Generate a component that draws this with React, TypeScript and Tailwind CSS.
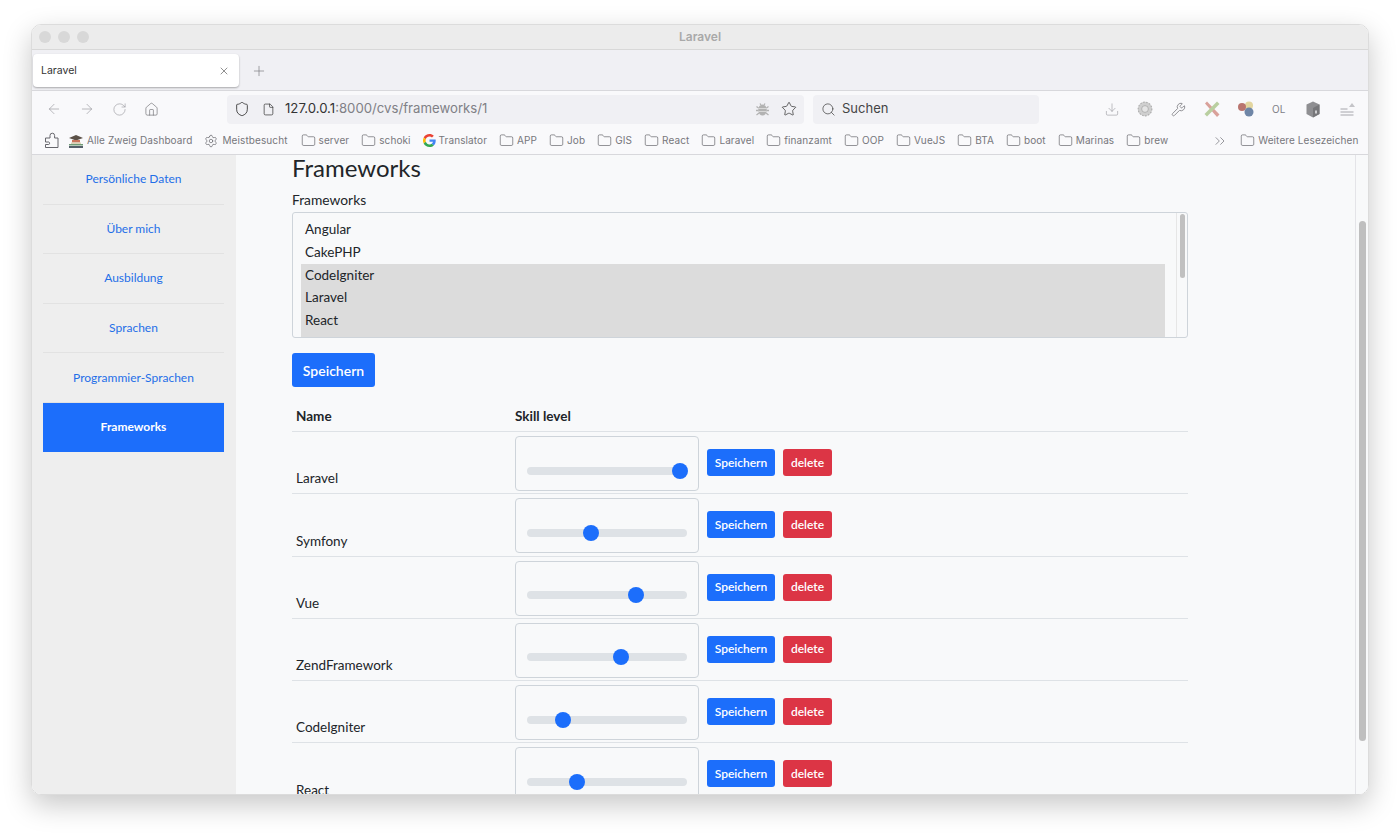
import { ArrowLeft, ArrowRight, ChevronsRight, Download, File, Folder, Home, Plus, RotateCw, Search, Settings, Shield, Star, Wrench, X } from 'lucide-react'

const bookmarks = ['server', 'schoki']
const folders = ['APP', 'Job', 'GIS', 'React', 'Laravel', 'finanzamt', 'OOP', 'VueJS', 'BTA', 'boot', 'Marinas', 'brew']
const navItems = ['Persönliche Daten', 'Über mich', 'Ausbildung', 'Sprachen', 'Programmier-Sprachen']
const options = [
  { name: 'Angular', selected: false },
  { name: 'CakePHP', selected: false },
  { name: 'CodeIgniter', selected: true },
  { name: 'Laravel', selected: true },
  { name: 'React', selected: true },
]
const rows = [
  { name: 'Laravel', thumb: 145 },
  { name: 'Symfony', thumb: 56 },
  { name: 'Vue', thumb: 101 },
  { name: 'ZendFramework', thumb: 86 },
  { name: 'CodeIgniter', thumb: 28 },
  { name: 'React', thumb: 42 },
]

function FolderMark({ label }: { label: string }) {
  return (
    <div className="flex items-center gap-[3px] shrink-0">
      <Folder size={15} strokeWidth={1} className="text-[#55555c]" />
      <span>{label}</span>
    </div>
  )
}

function PuzzleIcon() {
  return (
    <svg width="15" height="17" viewBox="0 0 15 17" fill="none" stroke="#66666c" strokeWidth="1" className="shrink-0">
      <path d="M1.500 6H6V3.500a2.300 2.300 0 0 1 4.600 0V6h3.400v9.500H1.500V12.500h3.200c1.200 0 1.200-2.500 0-2.500H1.500z" strokeLinejoin="round" />
    </svg>
  )
}

function CapIcon() {
  return (
    <svg width="16" height="16" viewBox="0 0 16 16" className="shrink-0">
      <path d="M1 5l7-3 7 3-7 2.500z" fill="#5b5148" />
      <path d="M4 7h8v2.500H4z" fill="#c9745c" />
      <path d="M3 9.500h10V11H3z" fill="#d9d3b8" />
      <path d="M1 11h14v1.500H1z" fill="#6f9a76" />
      <path d="M1 13h14v2H1z" fill="#55606a" />
    </svg>
  )
}

function GoogleIcon() {
  return (
    <svg width="13" height="13" viewBox="0 0 48 48" className="shrink-0">
      <path fill="#EA4335" d="M24 9.500c3.500 0 6.700 1.300 9.100 3.500l6.800-6.800C35.800 2.400 30.300 0 24 0 14.600 0 6.500 5.400 2.600 13.200l7.900 6.200C12.400 13.700 17.700 9.500 24 9.500z" />
      <path fill="#4285F4" d="M46.900 24.500c0-1.600-.1-3.100-.4-4.500H24v9h12.900c-.6 3-2.200 5.500-4.800 7.200l7.700 6c4.500-4.200 7.100-10.300 7.100-17.700z" />
      <path fill="#FBBC05" d="M10.500 28.600c-.5-1.400-.8-3-.8-4.600s.3-3.200.8-4.600l-7.900-6.200C1 16.500 0 20.100 0 24s1 7.500 2.600 10.800z" />
      <path fill="#34A853" d="M24 48c6.500 0 11.900-2.100 15.900-5.800l-7.700-6c-2.200 1.500-4.900 2.300-8.200 2.300-6.300 0-11.600-4.200-13.500-9.900l-7.900 6.200C6.500 42.600 14.600 48 24 48z" />
    </svg>
  )
}

function BugIcon() {
  return (
    <svg width="15" height="16" viewBox="0 0 15 16" fill="none" className="ml-auto shrink-0">
      <path d="M5 2.500L6 4M10 2.500L9 4M1.500 5.500L3.500 7M13.500 5.500L11.500 7M1 9.500h2.500M14 9.500h-2.500M1.500 14l2.500-2M13.500 14L11 12" stroke="#b2b2b2" strokeWidth="1.300" />
      <ellipse cx="7.500" cy="9" rx="4.300" ry="5.500" fill="#b2b2b2" />
      <path d="M3.500 7.500h8M3.500 10.500h8" stroke="#e6e6e6" strokeWidth=".7" />
    </svg>
  )
}

function GearDiscIcon() {
  return (
    <svg width="16" height="16" viewBox="0 0 16 16">
      <circle cx="8" cy="8" r="7.200" fill="#cfcfcf" />
      <circle cx="8" cy="8" r="6.800" fill="none" stroke="#b0b0b0" strokeWidth="1.200" strokeDasharray="1.500 1.500" />
      <circle cx="8" cy="8" r="3.400" fill="#e4e4e4" stroke="#a8a8a8" strokeWidth=".8" />
    </svg>
  )
}

function CrossIcon() {
  return (
    <svg width="18" height="18" viewBox="0 0 18 18">
      <path d="M2 3.500L4 1.500l12.500 13-2.500 2.500z" fill="#d9a19a" />
      <path d="M14 1.500l2.500 2.500L4 16.500 1.500 14z" fill="#b9cfa0" />
    </svg>
  )
}

function BallsIcon() {
  return (
    <svg width="18" height="18" viewBox="0 0 18 18">
      <circle cx="12" cy="5.500" r="4" fill="#e3d6a0" />
      <circle cx="5" cy="7" r="4" fill="#b9756f" />
      <circle cx="12" cy="12" r="4.500" fill="#6f86a6" />
    </svg>
  )
}

function CubeIcon() {
  return (
    <svg width="14" height="17" viewBox="0 0 14 17">
      <path d="M7 .5l6.500 3v9.500L7 16.500.5 13V3.500z" fill="#8f8f92" />
      <path d="M7 7v9.500L13.500 13V3.500z" fill="#77777a" />
      <path d="M9 9.500h2v3H9z" fill="#cfcfd1" />
    </svg>
  )
}

function OverflowIcon() {
  return (
    <svg width="15" height="15" viewBox="0 0 15 15">
      <path d="M9 5l3-4 3 4z" fill="#c4c4c8" />
      <path d="M.5 7h7M.5 10h13M.5 13h13" stroke="#a6a6ac" strokeWidth="1" />
    </svg>
  )
}

function SkillRow({ name, thumb }: { name: string; thumb: number }) {
  return (
    <div className="flex h-[62.3px] border-b border-[#dee2e6]">
      <div className="w-[223px] px-1 flex items-end pb-[5px] text-[13.5px] leading-5 text-[#212529]">{name}</div>
      <div className="h-[55px] w-[184px] shrink-0 bg-[#f8f9fa] border border-[#ced4da] rounded flex items-center pt-[14px] px-[11px] mt-1">
        <div className="relative w-full h-2 rounded-full bg-[#dee2e6]">
          <div className="absolute -top-1 w-4 h-4 rounded-full bg-[#1c6efb]" style={{ left: thumb }} />
        </div>
      </div>
      <div className="flex items-start gap-2 ml-2 pt-[17px]">
        <button className="h-[27px] w-[68px] rounded-[3px] bg-[#1c6efb] text-white text-[12px] font-semibold">Speichern</button>
        <button className="h-[27px] w-[49px] rounded-[3px] bg-[#dc3545] text-white text-[12px] font-semibold">delete</button>
      </div>
    </div>
  )
}

export default function App() {
  return (
    <div className="w-[1400px] h-[834px] bg-white pt-6 pl-[31px] overflow-hidden">
      <div className="w-[1338px] h-[771px] rounded-[10px] overflow-hidden flex flex-col border border-[#dcdcdc] shadow-[0_10px_28px_rgba(0,0,0,0.22)] font-['Inter',sans-serif]">
        {/* Title bar */}
        <div className="relative h-[25px] shrink-0 bg-[#ececec] border-b border-[#d8d8d8] flex items-center justify-center">
          <div className="absolute left-[7px] top-[6px] flex gap-[7px]">
            <span className="w-3 h-3 rounded-full bg-[#d8d8d8]" />
            <span className="w-3 h-3 rounded-full bg-[#d8d8d8]" />
            <span className="w-3 h-3 rounded-full bg-[#d8d8d8]" />
          </div>
          <span className="text-[12px] font-semibold text-[#a9a9a9]">Laravel</span>
        </div>

        {/* Tabs */}
        <div className="h-[41px] shrink-0 bg-[#f0f0f4] border-b border-[#d8d8dc] flex items-center pl-[1px] pt-[1px]">
          <div className="w-[206px] h-[33px] bg-white rounded-[4px] shadow-[0_1px_2px_rgba(0,0,0,0.3)] flex items-center justify-between px-2 text-[10.5px] text-[#333]">
            <span>Laravel</span>
            <X size={12} strokeWidth={1.2} className="text-[#444] mr-[1px]" />
          </div>
          <Plus size={16} strokeWidth={1} className="ml-3 text-[#77777c]" />
        </div>

        {/* Toolbar */}
        <div className="h-[36px] shrink-0 bg-[#f9f9fb] flex items-center">
          <div className="flex items-center w-[194px] pl-[14px] gap-[17px] text-[#98989e]">
            <ArrowLeft size={16} strokeWidth={1} />
            <ArrowRight size={16} strokeWidth={1} />
            <RotateCw size={15} strokeWidth={1} />
            <Home size={15} strokeWidth={1} className="text-[#66666c]" />
          </div>
          <div className="w-[577px] h-[29px] ml-[1px] rounded-[4px] bg-[#f0f0f4] flex items-center pl-[7px] pr-[7px]">
            <Shield size={16} strokeWidth={1.3} className="text-[#333]" />
            <File size={13} strokeWidth={1.3} className="ml-[12px] text-[#333]" />
            <span className="ml-[10px] text-[13.2px] text-[#808086]"><span className="text-[#333]">127.0.0.1</span>:8000/cvs/frameworks/1</span>
            <BugIcon />
            <Star size={16} strokeWidth={1.1} className="ml-[11px] text-[#333]" />
          </div>
          <div className="w-[226px] h-[29px] ml-[9px] rounded-[4px] bg-[#f0f0f4] flex items-center pl-2 text-[13px] text-[#444]">
            <Search size={15} strokeWidth={1.2} className="mr-[6px] text-[#444]" />
            Suchen
          </div>
          <div className="flex items-center ml-[65px] text-[#9a9aa0]">
            <Download size={15} strokeWidth={1} className="w-[16px]" />
            <span className="ml-[17px]"><GearDiscIcon /></span>
            <Wrench size={15} strokeWidth={1.5} className="ml-[18px] text-[#8a8a8e]" />
            <span className="ml-[17px]"><CrossIcon /></span>
            <span className="ml-[16px]"><BallsIcon /></span>
            <span className="ml-[17px] text-[10px] text-[#808086]">OL</span>
            <span className="ml-[21px]"><CubeIcon /></span>
            <span className="ml-[20px]"><OverflowIcon /></span>
          </div>
        </div>

        {/* Bookmarks */}
        <div className="h-[28px] shrink-0 bg-[#f9f9fb] border-b border-[#d8d8dc] flex items-center pl-3 text-[10px] tracking-[0.1px] whitespace-nowrap text-[#77777c]">
          <PuzzleIcon />
          <div className="flex items-center gap-[3px] ml-[9px]"><CapIcon /><span>Alle Zweig Dashboard</span></div>
          <div className="flex items-center gap-[4px] ml-3"><Settings size={14} strokeWidth={1.2} className="text-[#66666c]" /><span>Meistbesucht</span></div>
          <div className="flex items-center gap-3 ml-[13px]">
            {bookmarks.map(b => <FolderMark key={b} label={b} />)}
            <div className="flex items-center gap-[3px]"><GoogleIcon /><span>Translator</span></div>
            {folders.map(f => <FolderMark key={f} label={f} />)}
          </div>
          <ChevronsRight size={16} strokeWidth={1} className="ml-[44px] text-[#66666c]" />
          <div className="ml-[12px]"><FolderMark label="Weitere Lesezeichen" /></div>
        </div>

        {/* Page */}
        <div className="flex-1 min-h-0 flex bg-[#f8f9fa]">
          <aside className="w-[204px] shrink-0 bg-[#eeeeee] pl-[11px] pr-[12px] font-['Lato',sans-serif] text-[12px]">
            {navItems.map(item => (
              <div key={item} className="h-[49.6px] border-b border-[#e2e2e2] flex items-center justify-center text-[#1f6fe8]">{item}</div>
            ))}
            <div className="h-[49px] bg-[#1c6efb] flex items-center justify-center text-white font-bold">Frameworks</div>
          </aside>

          <main className="flex-1 min-w-0 overflow-hidden pl-[56px] font-['Lato',sans-serif] text-[#212529]">
            <div className="w-[896px]">
              <h1 className="text-[24px] leading-[28px] mt-[-1px] text-[#212529]">Frameworks</h1>
              <div className="text-[13.8px] leading-5 mt-2">Frameworks</div>
              <div className="mt-[2px] h-[126px] border border-[#ced4da] rounded-[3px] flex overflow-hidden">
                <div className="flex-1 flex flex-col pl-2 pr-[11px] pt-[5px] text-[13.5px]">
                  {options.map(o => (
                    <div key={o.name} className={`h-[22.8px] leading-[23.500px] px-1 ${o.selected ? 'bg-[#dcdcdc]' : ''}`}>{o.name}</div>
                  ))}
                  <div className="flex-1 bg-[#dcdcdc]" />
                </div>
                <div className="w-[11px] shrink-0 border-l border-[#e6e6e6] pt-[1px] flex justify-center">
                  <div className="w-[5px] h-[64px] rounded-full bg-[#c0c0c0]" />
                </div>
              </div>
              <button className="mt-[15px] w-[83px] h-[34px] rounded-[3px] bg-[#1c6efb] text-white text-[14px] font-semibold">Speichern</button>
              <div className="mt-[14px] h-[31px] border-b border-[#dee2e6] flex items-center text-[13.5px] font-bold text-[#212529]">
                <div className="w-[223px] px-1">Name</div>
                <div>Skill level</div>
              </div>
              {rows.map(r => <SkillRow key={r.name} name={r.name} thumb={r.thumb} />)}
            </div>
          </main>

          <div className="w-[13px] shrink-0 border-l border-[#e4e4e8] pt-[66px] flex justify-center bg-[#f8f9fa]">
            <div className="w-[7px] h-[520px] rounded-full bg-[#bfbfbf]" />
          </div>
        </div>
      </div>
    </div>
  )
}
